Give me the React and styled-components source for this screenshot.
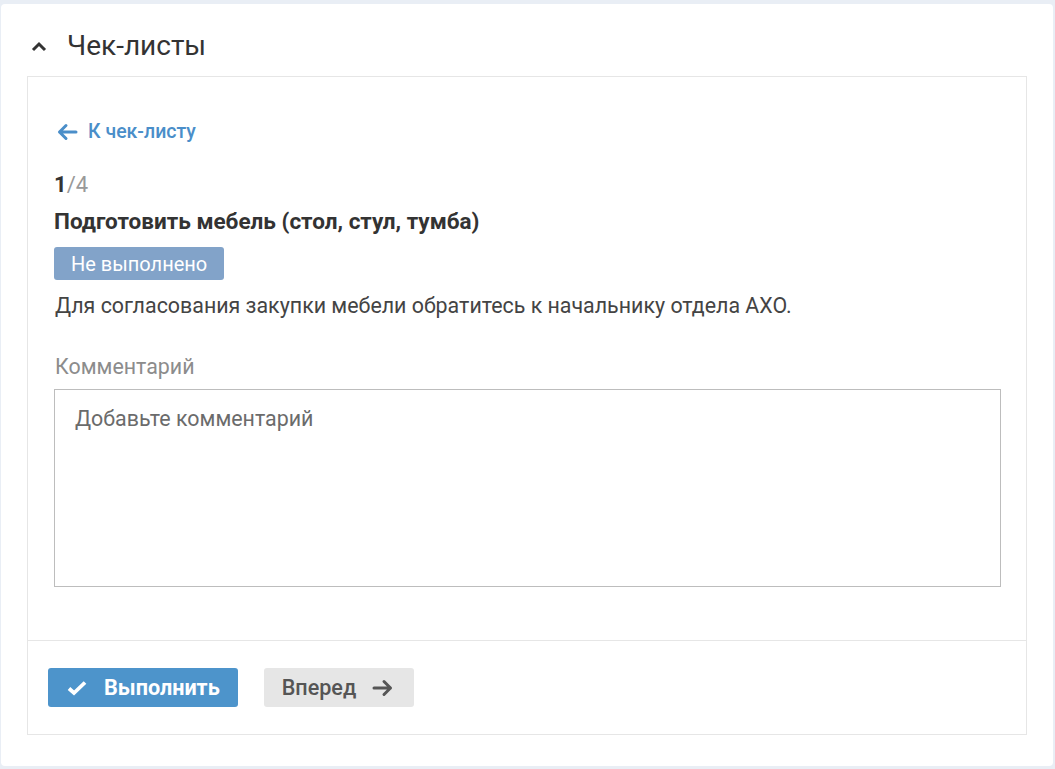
import React from 'react';
import styled, { createGlobalStyle } from 'styled-components';

const GlobalStyle = createGlobalStyle`
  html, body {
    margin: 0;
    padding: 0;
    background: #e9eef5;
    font-family: Roboto, "Noto Sans", Arial, sans-serif;
  }
  * { box-sizing: border-box; }
`;

const Page = styled.div`
  padding: 4px 2px 3px 1px;
`;

const Card = styled.section`
  background: #fff;
  border-radius: 4px;
  padding: 0 26px 31px 26px;
  min-height: 762px;
`;

const Header = styled.div`
  display: flex;
  align-items: center;
  height: 72px;
  padding: 12px 0 0 4px;
  gap: 20px;
  color: #333;
`;

const Title = styled.h2`
  margin: 0;
  font-size: 28px;
  font-weight: 400;
  line-height: 32px;
  color: #333;
`;

const Panel = styled.div`
  border: 1px solid #e6e6e6;
`;

const Body = styled.div`
  padding: 44px 25px 53px 26px;
  display: flex;
  flex-direction: column;
  align-items: flex-start;
`;

const BackLink = styled.a`
  display: flex;
  align-items: center;
  gap: 10px;
  color: #4a8ec9;
  font-size: 19.5px;
  font-weight: 500;
  line-height: 22px;
  text-decoration: none;
  margin-left: 2px;
  cursor: pointer;
`;

const Counter = styled.div`
  margin-top: 30px;
  font-size: 22px;
  line-height: 24px;
  color: #999;
  b {
    color: #333;
    font-weight: 700;
  }
`;

const TaskTitle = styled.div`
  margin-top: 12px;
  font-size: 22.5px;
  font-weight: 700;
  line-height: 24px;
  color: #333;
`;

const Badge = styled.span`
  margin-top: 14px;
  display: inline-flex;
  align-items: center;
  height: 33px;
  padding: 0 17px;
  border-radius: 3px;
  background: #82a3c9;
  color: #fff;
  font-size: 20px;
  line-height: 24px;
`;

const Text = styled.p`
  margin: 14px 0 0 1px;
  font-size: 21.4px;
  line-height: 24px;
  color: #444;
`;

const Label = styled.label`
  margin: 37px 0 0 1px;
  font-size: 21.4px;
  line-height: 24px;
  color: #8c8c8c;
`;

const Comment = styled.textarea`
  margin-top: 10px;
  width: 947px;
  height: 198px;
  border: 1px solid #bdbdbd;
  border-radius: 0;
  padding: 17px 20px;
  font-family: inherit;
  font-size: 21.4px;
  line-height: 24px;
  color: #333;
  resize: none;
  outline: none;
  &::placeholder {
    color: #6b6b6b;
  }
`;

const Footer = styled.div`
  border-top: 1px solid #e6e6e6;
  padding: 27px 20px 27px 20px;
  display: flex;
  gap: 26px;
`;

const Button = styled.button`
  display: inline-flex;
  align-items: center;
  height: 39px;
  border: none;
  border-radius: 3px;
  font-family: inherit;
  font-size: 21.6px;
  font-weight: ${p => (p.$primary ? 700 : 500)};
  background: ${p => (p.$primary ? '#4d94cb' : '#e6e6e6')};
  color: ${p => (p.$primary ? '#fff' : '#555')};
  padding: ${p => (p.$primary ? '0 18px 0 19px' : '0 20px 0 18px')};
  gap: ${p => (p.$primary ? '17px' : '16px')};
  cursor: pointer;
`;

const Chevron = () => (
  <svg width="16" height="11" viewBox="0 0 16 11">
    <path d="M2 9 L8 3 L14 9" fill="none" stroke="#333" strokeWidth="3" />
  </svg>
);

const ArrowLeft = () => (
  <svg width="22" height="18" viewBox="0 0 22 18">
    <path d="M20 9 H3.5 M10 2.5 L3.5 9 L10 15.5" fill="none" stroke="#4a8ec9" strokeWidth="3" strokeLinejoin="round" strokeLinecap="round" />
  </svg>
);

const ArrowRight = () => (
  <svg width="22" height="18" viewBox="0 0 22 18">
    <path d="M2 9 H18.5 M12 2.5 L18.5 9 L12 15.5" fill="none" stroke="#555" strokeWidth="3" strokeLinejoin="round" strokeLinecap="round" />
  </svg>
);

const Check = () => (
  <svg width="20" height="16" viewBox="0 0 20 16">
    <path d="M2 8.5 L7 13 L18 2.5" fill="none" stroke="#fff" strokeWidth="3.8" />
  </svg>
);

export default function App() {
  return (
    <>
      <GlobalStyle />
      <Page>
        <Card>
          <Header>
            <Chevron />
            <Title>Чек-листы</Title>
          </Header>
          <Panel>
            <Body>
              <BackLink>
                <ArrowLeft />
                К чек-листу
              </BackLink>
              <Counter>
                <b>1</b>/4
              </Counter>
              <TaskTitle>Подготовить мебель (стол, стул, тумба)</TaskTitle>
              <Badge>Не выполнено</Badge>
              <Text>Для согласования закупки мебели обратитесь к начальнику отдела АХО.</Text>
              <Label>Комментарий</Label>
              <Comment placeholder="Добавьте комментарий" />
            </Body>
            <Footer>
              <Button $primary>
                <Check />
                Выполнить
              </Button>
              <Button>
                Вперед
                <ArrowRight />
              </Button>
            </Footer>
          </Panel>
        </Card>
      </Page>
    </>
  );
}
